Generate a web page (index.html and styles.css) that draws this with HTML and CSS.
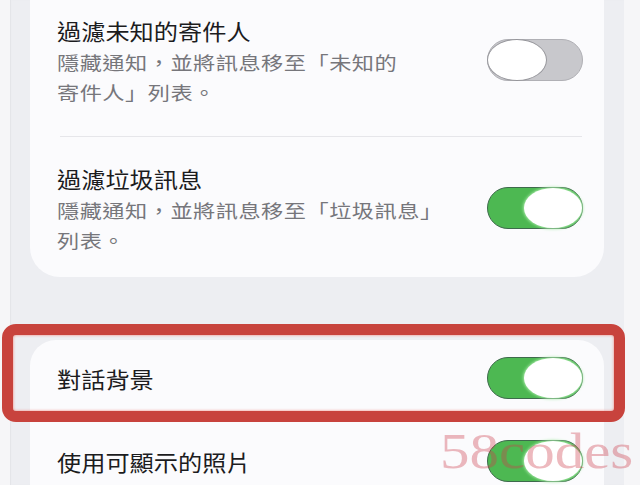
FILE: index.html
```html
<!DOCTYPE html>
<html lang="zh-Hant">
<head>
<meta charset="utf-8">
<link rel="stylesheet" href="styles.css">
</head>
<body>
<div class="screen">
  <section class="card card-top">
    <div class="row row-a">
      <div class="text">
        <div class="title"><span class="sx">過濾未知的寄件人</span></div>
        <div class="sub"><span class="sx">隱藏通知，並將訊息移至「未知的</span></div>
        <div class="sub"><span class="sx">寄件人」列表。</span></div>
      </div>
      <div class="toggle off"><div class="knob"></div></div>
    </div>
    <div class="divider"></div>
    <div class="row row-b">
      <div class="text">
        <div class="title"><span class="sx">過濾垃圾訊息</span></div>
        <div class="sub"><span class="sx">隱藏通知，並將訊息移至「垃圾訊息」</span></div>
        <div class="sub"><span class="sx">列表。</span></div>
      </div>
      <div class="toggle on"><div class="knob"></div></div>
    </div>
  </section>

  <section class="card card-bottom">
    <div class="row row-c">
      <div class="text">
        <div class="title"><span class="sx">對話背景</span></div>
      </div>
      <div class="toggle on"><div class="knob"></div></div>
    </div>
    <div class="divider"></div>
    <div class="row row-d">
      <div class="text">
        <div class="title"><span class="sx">使用可顯示的照片</span></div>
      </div>
      <div class="toggle on"><div class="knob"></div></div>
    </div>
  </section>
</div>
<div class="highlight"></div>
<div class="watermark">58codes</div>
</body>
</html>
```

FILE: styles.css
```css
html, body {
  margin: 0;
  padding: 0;
}

body {
  width: 640px;
  height: 485px;
  overflow: hidden;
  background: #f6f6f8;
  font-family: "Noto Sans CJK TC", "Noto Sans CJK SC", sans-serif;
  position: relative;
}

.screen {
  margin-left: 10px;
  width: 614px;
  height: 485px;
  overflow: hidden;
  background: #edeef2;
  box-sizing: border-box;
  padding: 0 20px;
  box-shadow: inset 1px 0 1px rgba(0, 0, 0, 0.04);
}

.card {
  background: #fbfbfd;
  border-radius: 30px;
}

.card-top {
  margin-top: -30px;
  padding-top: 43px;
  padding-bottom: 22px;
}

.card-bottom {
  margin-top: 63px;
  border-radius: 26px 26px 0 0;
  height: 200px;
}

.row {
  display: flex;
  align-items: center;
  justify-content: space-between;
  padding: 0 21px 0 27px;
}

.row-a {
  padding-bottom: 29px;
}

.row-b {
  padding-top: 24px;
}

.row-c {
  height: 75px;
}

.row-d {
  height: 90px;
}

.divider {
  height: 1px;
  background: #e6e6ea;
  margin: 0 22px 0 30px;
}

.title {
  font-size: 22px;
  line-height: 34px;
  color: #1c1c1e;
  white-space: nowrap;
}

.title .sx {
  transform: scaleX(1.1);
}

.sub {
  font-size: 18.5px;
  line-height: 30px;
  color: #76767b;
  letter-spacing: 0.4px;
  white-space: nowrap;
}

.sx {
  display: inline-block;
  transform: scaleX(1.2);
  transform-origin: 0 50%;
}

.toggle {
  flex: none;
  width: 96px;
  height: 42px;
  border-radius: 21px;
  box-sizing: border-box;
  display: flex;
  position: relative;
}

.toggle .knob {
  width: 60px;
  height: 100%;
  border-radius: 50%;
  background: #ffffff;
  box-sizing: border-box;
}

.toggle.off {
  background: #c8c8cc;
  border: 1.5px solid #b0b0b5;
  justify-content: flex-start;
}

.toggle.off .knob {
  border: 1.5px solid #96969b;
  margin: -1.5px 0 0 -1.5px;
  height: 42px;
}

.toggle.on {
  background: #4db852;
  border: 1.5px solid #3e6a4c;
  justify-content: flex-end;
}

.toggle.on .knob {
  box-shadow: 0 0 3px 1px #a6e8a6;
  width: 58px;
}

.highlight {
  position: absolute;
  left: 2px;
  top: 324px;
  width: 623px;
  height: 98px;
  box-sizing: border-box;
  border: 11px solid #c8433d;
  border-radius: 14px;
  box-shadow: inset 0 0 2px 1px rgba(240, 150, 140, 0.6);
}

.watermark {
  position: absolute;
  left: 440px;
  top: 426px;
  font-family: "Liberation Serif", serif;
  font-size: 50px;
  line-height: 50px;
  color: rgba(205, 60, 75, 0.36);
  transform: scaleX(1.18);
  transform-origin: 0 50%;
  white-space: nowrap;
}
```
